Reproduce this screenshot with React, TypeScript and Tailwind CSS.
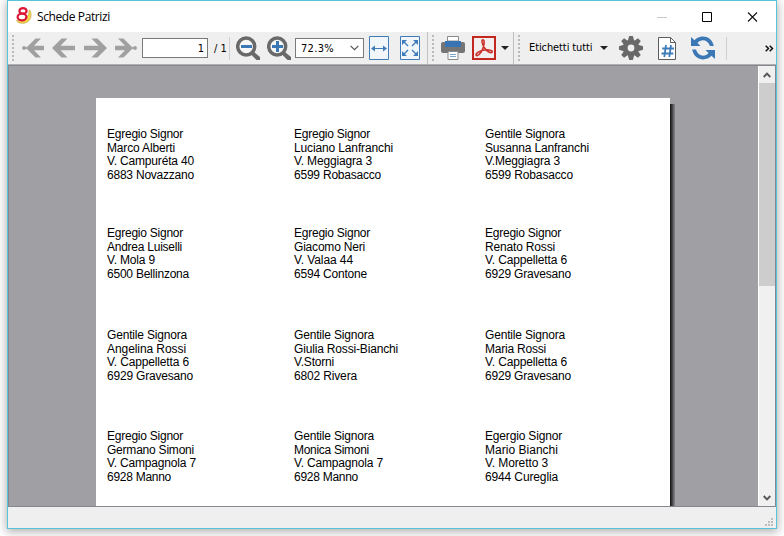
import React from 'react';

const ROWS: { h: string; labels: [string, number][][] }[] = [
  {
    h: 'h-[99px]',
    labels: [
      [['Egregio Signor', 76], ['Marco Alberti', 68], ['V. Campuréta 40', 87], ['6883 Novazzano', 87]],
      [['Egregio Signor', 76], ['Luciano Lanfranchi', 99], ['V. Meggiagra 3', 78], ['6599 Robasacco', 87]],
      [['Gentile Signora', 80], ['Susanna Lanfranchi', 104], ['V.Meggiagra 3', 75], ['6599 Robasacco', 88]],
    ],
  },
  {
    h: 'h-[102px]',
    labels: [
      [['Egregio Signor', 76], ['Andrea Luiselli', 75], ['V. Mola 9', 48], ['6500 Bellinzona', 82]],
      [['Egregio Signor', 76], ['Giacomo Neri', 71], ['V. Valaa 44', 59], ['6594 Contone', 73]],
      [['Egregio Signor', 76], ['Renato Rossi', 70], ['V. Cappelletta 6', 82], ['6929 Gravesano', 86]],
    ],
  },
  {
    h: 'h-[101px]',
    labels: [
      [['Gentile Signora', 80], ['Angelina Rossi', 79], ['V. Cappelletta 6', 82], ['6929 Gravesano', 86]],
      [['Gentile Signora', 80], ['Giulia Rossi-Bianchi', 104], ['V.Storni', 40], ['6802 Rivera', 63]],
      [['Gentile Signora', 80], ['Maria Rossi', 61], ['V. Cappelletta 6', 82], ['6929 Gravesano', 86]],
    ],
  },
  {
    h: 'h-[101px]',
    labels: [
      [['Egregio Signor', 76], ['Germano Simoni', 87], ['V. Campagnola 7', 89], ['6928 Manno', 64]],
      [['Gentile Signora', 80], ['Monica Simoni', 75], ['V. Campagnola 7', 89], ['6928 Manno', 64]],
      [['Egergio Signor', 77], ['Mario Bianchi', 73], ['V. Moretto 3', 63], ['6944 Cureglia', 73]],
    ],
  },
];

function PrintLine({ text, width }: { text: string; width: number }) {
  const ref = React.useRef<HTMLSpanElement>(null);
  const [tracking, setTracking] = React.useState(0);
  React.useLayoutEffect(() => {
    if (ref.current) {
      setTracking((width - ref.current.getBoundingClientRect().width) / text.length);
    }
  }, [text, width]);
  return (
    <div className="h-[13.7px] whitespace-nowrap leading-[13.7px]">
      <span ref={ref} style={{ letterSpacing: tracking + 'px' }}>{text}</span>
    </div>
  );
}

function Handle({ className }: { className: string }) {
  return (
    <div className={'flex shrink-0 flex-col gap-[2px] ' + className}>
      {[0, 1, 2, 3, 4, 5, 6].map((i) => (
        <span key={i} className="h-[2px] w-[2px] bg-[#b9b9b9]" />
      ))}
    </div>
  );
}

function Arrow({ className, flip, end }: { className: string; flip?: boolean; end?: boolean }) {
  return (
    <svg className={'h-[20px] w-[23px] shrink-0 ' + className} viewBox="0 0 23 20">
      <g transform={flip ? 'translate(23 0) scale(-1 1)' : undefined} fill="#a0a0a0">
        {end ? (
          <>
            <circle cx="2" cy="10" r="1.9" />
            <path d="M2 9.2H6V10.8H2Z" />
            <path d="M4 10L13.5 .5H19L12 7.7H22V12.3H12L19 19.5H13.5Z" />
          </>
        ) : (
          <path d="M0 10L9.5 .5H15.5L8.5 7.7H23V12.3H8.5L15.5 19.5H9.5Z" />
        )}
      </g>
    </svg>
  );
}

function Zoom({ className, plus }: { className: string; plus?: boolean }) {
  return (
    <svg className={'h-[24px] w-[24px] shrink-0 ' + className} viewBox="0 0 24 24">
      <path d="M15.5 15.5L18.3 16.2L24 21V24H20.5L15 18.5Z" fill="#696969" />
      <circle cx="10.2" cy="10.4" r="8.5" fill="#f7f7f7" stroke="#696969" strokeWidth="3.5" />
      <path d="M5 9H16V12H5Z" fill="#3b78b5" />
      {plus && <path d="M9 5H12V16H9Z" fill="#3b78b5" />}
    </svg>
  );
}

function Triangle({ className }: { className: string }) {
  return (
    <svg className={'h-[4px] w-[8px] shrink-0 ' + className} viewBox="0 0 8 4">
      <path d="M0 0H8L4 4Z" fill="#222" />
    </svg>
  );
}

function Toolbar() {
  return (
    <div className="flex h-[33px] shrink-0 items-center overflow-hidden border-b border-[#b0b0b0] bg-[#efefef] text-[11px] text-black [font-family:'DejaVu_Sans_Condensed','DejaVu_Sans',sans-serif]">
      <Handle className="ml-[4px]" />
      <Arrow className="ml-[8px]" end />
      <Arrow className="ml-[7px]" />
      <Arrow className="ml-[9px]" flip />
      <Arrow className="ml-[7px]" flip end />
      <div className="ml-[5px] flex h-[20px] w-[66px] shrink-0 items-center justify-end border border-[#7a7a7a] bg-white pr-[3px] pt-[2px]">1</div>
      <span className="ml-[6px] w-[15px] shrink-0 whitespace-nowrap pt-[2px]">/ 1</span>
      <i className="h-[23px] w-px shrink-0 bg-[#cfcfcf]" />
      <Zoom className="ml-[6px]" />
      <Zoom className="ml-[7px]" plus />
      <div className="ml-[4px] flex h-[20px] w-[69px] shrink-0 items-center justify-between border border-[#7a7a7a] bg-white pl-[5px] pr-[4px]">
        <span className="pt-[2px] tracking-[0.3px]">72.3%</span>
        <svg className="h-[6px] w-[9px]" viewBox="0 0 9 6">
          <path d="M.6 .8L4.5 4.7L8.4 .8" fill="none" stroke="#555" strokeWidth="1.2" />
        </svg>
      </div>
      <svg className="ml-[5px] h-[24px] w-[20px] shrink-0" viewBox="0 0 20 24">
        <path d="M.5 .5H19.5V23.5H.5Z" fill="#f1f6fb" stroke="#3f7cb8" />
        <path d="M3 12.5H17" stroke="#3f7cb8" />
        <path d="M2 12.5L6 9.5V15.5ZM18 12.5L14 9.5V15.5Z" fill="#3f7cb8" />
      </svg>
      <svg className="ml-[11px] h-[24px] w-[20px] shrink-0" viewBox="0 0 20 24">
        <path d="M.5 .5H19.5V23.5H.5Z" fill="#f1f6fb" stroke="#3f7cb8" />
        <path d="M3 5L8 10M17 5L12 10M3 19L8 14M17 19L12 14" stroke="#3f7cb8" strokeWidth="1.4" />
        <path d="M2 4H7L2 9ZM18 4H13L18 9ZM2 20H7L2 15ZM18 20H13L18 15Z" fill="#3f7cb8" />
      </svg>
      <i className="ml-[7px] h-full w-px shrink-0 bg-[#c0c0c0]" />
      <Handle className="ml-[4px]" />
      <svg className="ml-[7px] h-[24px] w-[24px] shrink-0" viewBox="0 0 24 24">
        <path d="M6.5 .5H17.5V5H6.5Z" fill="#fff" stroke="#8b8b8b" />
        <path d="M0 8Q0 6 2 6H22Q24 6 24 8V15Q24 17 22 17H2Q0 17 0 15Z" fill="#757575" />
        <path d="M4 5H20V11H4Z" fill="#3874b3" />
        <path d="M7 15.5H17V23.5H7Z" fill="#fff" stroke="#8b8b8b" />
        <path d="M9 18.5H15M9 20.5H15" stroke="#7ba3cf" />
      </svg>
      <svg className="ml-[7px] h-[24px] w-[24px] shrink-0" viewBox="0 0 24 24">
        <path d="M1 1H23V23H1Z" fill="#f3efef" stroke="#c3261f" strokeWidth="2" />
        <path d="M4.2 19.2C3.2 17.4 7.5 15 11 14.2C15 13.3 20.6 13.8 20.3 15.9C19.8 18 14.5 15.5 12.2 11.5C10.3 8.2 9 3.8 11 3.8C12.9 3.8 12.4 9.6 10.3 13.9C8.6 17.4 5.3 20.8 4.2 19.2Z" fill="none" stroke="#cb3029" strokeWidth="1.6" />
      </svg>
      <Triangle className="ml-[5px]" />
      <i className="ml-[4px] h-full w-px shrink-0 bg-[#c0c0c0]" />
      <Handle className="ml-[4px]" />
      <span className="ml-[9px] w-[64px] shrink-0 whitespace-nowrap pt-px tracking-[-0.1px]">Etichetti tutti</span>
      <Triangle className="ml-[7px]" />
      <svg className="ml-[11px] h-[24px] w-[24px] shrink-0" viewBox="0 0 24 24">
        <g fill="#696969">
          {[0, 90].map((a) => (
            <path key={a} d="M10.2 0H13.8L15 4V20L13.8 24H10.2L9 20V4Z" transform={`rotate(${a} 12 12)`} />
          ))}
          {[45, 135].map((a) => (
            <path key={a} d="M10 .2H14L14.6 4V20L14 23.8H10L9.4 20V4Z" transform={`rotate(${a} 12 12)`} />
          ))}
          <circle cx="12" cy="12" r="8.3" />
        </g>
        <circle cx="12" cy="12" r="3.4" fill="#efefef" />
      </svg>
      <svg className="ml-[15px] h-[23px] w-[18px] shrink-0" viewBox="0 0 18 23">
        <path d="M.5 .5H12.5L17.5 5.5V22.5H.5Z" fill="#fff" stroke="#5c5c5c" />
        <path d="M12.5 .5V5.5H17.5" fill="none" stroke="#5c5c5c" />
        <path d="M8 8L6.3 20M13 8L11.3 20M4.2 11.5H16M3.5 16.5H15.3" stroke="#3f7cb8" strokeWidth="1.8" />
      </svg>
      <svg className="ml-[15px] h-[24px] w-[24px] shrink-0" viewBox="0 0 24 24">
        <path d="M0 1L3.5 4.2C9 -1.8 20.6 -.7 22.8 10H19C16.8 3.5 10 2.6 6.5 7L9.5 10H0Z" fill="#3b78b5" />
        <path d="M24 23L20.5 19.8C15 25.8 3.4 24.7 1.2 13.5H5C7.2 20.5 14 21.4 17.5 17L14.5 14H24Z" fill="#3b78b5" />
      </svg>
      <i className="ml-[11px] h-[23px] w-px shrink-0 bg-[#cfcfcf]" />
      <svg className="ml-[38px] h-[7px] w-[9px] shrink-0" viewBox="0 0 9 7">
        <path d="M.7 .7L3.5 3.5L.7 6.3M4.7 .7L7.5 3.5L4.7 6.3" fill="none" stroke="#111" strokeWidth="1.5" />
      </svg>
    </div>
  );
}

function TitleBar() {
  return (
    <div className="flex h-[31px] shrink-0 items-center bg-white">
      <svg className="ml-[8px] h-[17px] w-[16px] -translate-y-px" viewBox="0 0 16 17">
        <path d="M13.8 3.2C17.5 9.5 13 16.7 6 16.3C2.6 16.1 .8 14.8 .6 13.2C8 14.5 13 10.5 13 3.5Z" fill="#f5d84b" stroke="#b99b3b" strokeWidth=".6" />
        <ellipse cx="7" cy="3.9" rx="3.6" ry="2.7" fill="#fff" stroke="#dc1535" strokeWidth="2.2" />
        <ellipse cx="6" cy="10" rx="4.4" ry="3.3" fill="#fff" stroke="#dc1535" strokeWidth="2.2" />
      </svg>
      <span className="ml-[5px] text-[12px] tracking-[-0.4px] text-black [font-family:'Open_Sans','Noto_Sans',sans-serif]">Schede Patrizi</span>
      <svg className="ml-auto mr-[18px] h-[12px] w-[102px]" viewBox="0 0 102 12">
        <path d="M1 6.5H11" stroke="#c8c8c8" />
        <path d="M46.5 1.5H55.5V10.5H46.5Z" fill="none" stroke="#000" />
        <path d="M92 1.5L101 10.5M101 1.5L92 10.5" stroke="#111" strokeWidth="1.1" />
      </svg>
    </div>
  );
}

function ScrollBar() {
  return (
    <div className="flex w-[17px] shrink-0 flex-col border-l border-white bg-[#f0f0f0]">
      <div className="flex h-[17px] items-center justify-center">
        <svg className="h-[6px] w-[8px]" viewBox="0 0 8 6">
          <path d="M.7 5L4 1.7L7.3 5" fill="none" stroke="#555" strokeWidth="1.9" />
        </svg>
      </div>
      <div className="h-[203px] bg-[#cdcdcd]" />
      <div className="mt-auto flex h-[17px] items-center justify-center">
        <svg className="h-[6px] w-[8px]" viewBox="0 0 8 6">
          <path d="M.7 1L4 4.3L7.3 1" fill="none" stroke="#555" strokeWidth="1.9" />
        </svg>
      </div>
    </div>
  );
}

export default function App() {
  return (
    <div className="h-[536px] w-[784px] overflow-hidden bg-white px-[7px]">
      <div className="flex h-[529px] w-[770px] flex-col border border-[#58c3d6] shadow-[0_2px_9px_1px_rgba(0,0,0,0.3)]">
        <TitleBar />
        <Toolbar />
        <div className="flex h-[442px] shrink-0 overflow-hidden border border-[#828790] bg-[#a0a0a4]">
          <div className="flex min-w-0 flex-1 items-start overflow-hidden pl-[87px] pt-[32px]">
            <div className="h-[500px] w-[574px] shrink-0 bg-white pl-[11px] pt-[30px] text-[12px] text-black [font-family:'Liberation_Sans',Arial,sans-serif]">
              {ROWS.map((row, r) => (
                <div key={r} className={'grid grid-cols-[187px_191px_185px] ' + row.h}>
                  {row.labels.map((label, c) => (
                    <div key={c}>
                      {label.map(([text, width]) => (
                        <PrintLine key={text} text={text} width={width} />
                      ))}
                    </div>
                  ))}
                </div>
              ))}
            </div>
            <div className="mt-[6px] h-[500px] w-[5px] shrink-0 bg-linear-to-r from-[#111] to-[#8c8c90]" />
          </div>
          <ScrollBar />
        </div>
        <div className="flex flex-1 items-end justify-end bg-[#efefef] pb-[2px] pr-[3px]">
          <svg className="h-[8px] w-[8px]" viewBox="0 0 8 8" fill="#bdbdbd">
            <path d="M6 0H8V2H6ZM3 3H5V5H3ZM6 3H8V5H6ZM0 6H2V8H0ZM3 6H5V8H3ZM6 6H8V8H6Z" />
          </svg>
        </div>
      </div>
    </div>
  );
}
